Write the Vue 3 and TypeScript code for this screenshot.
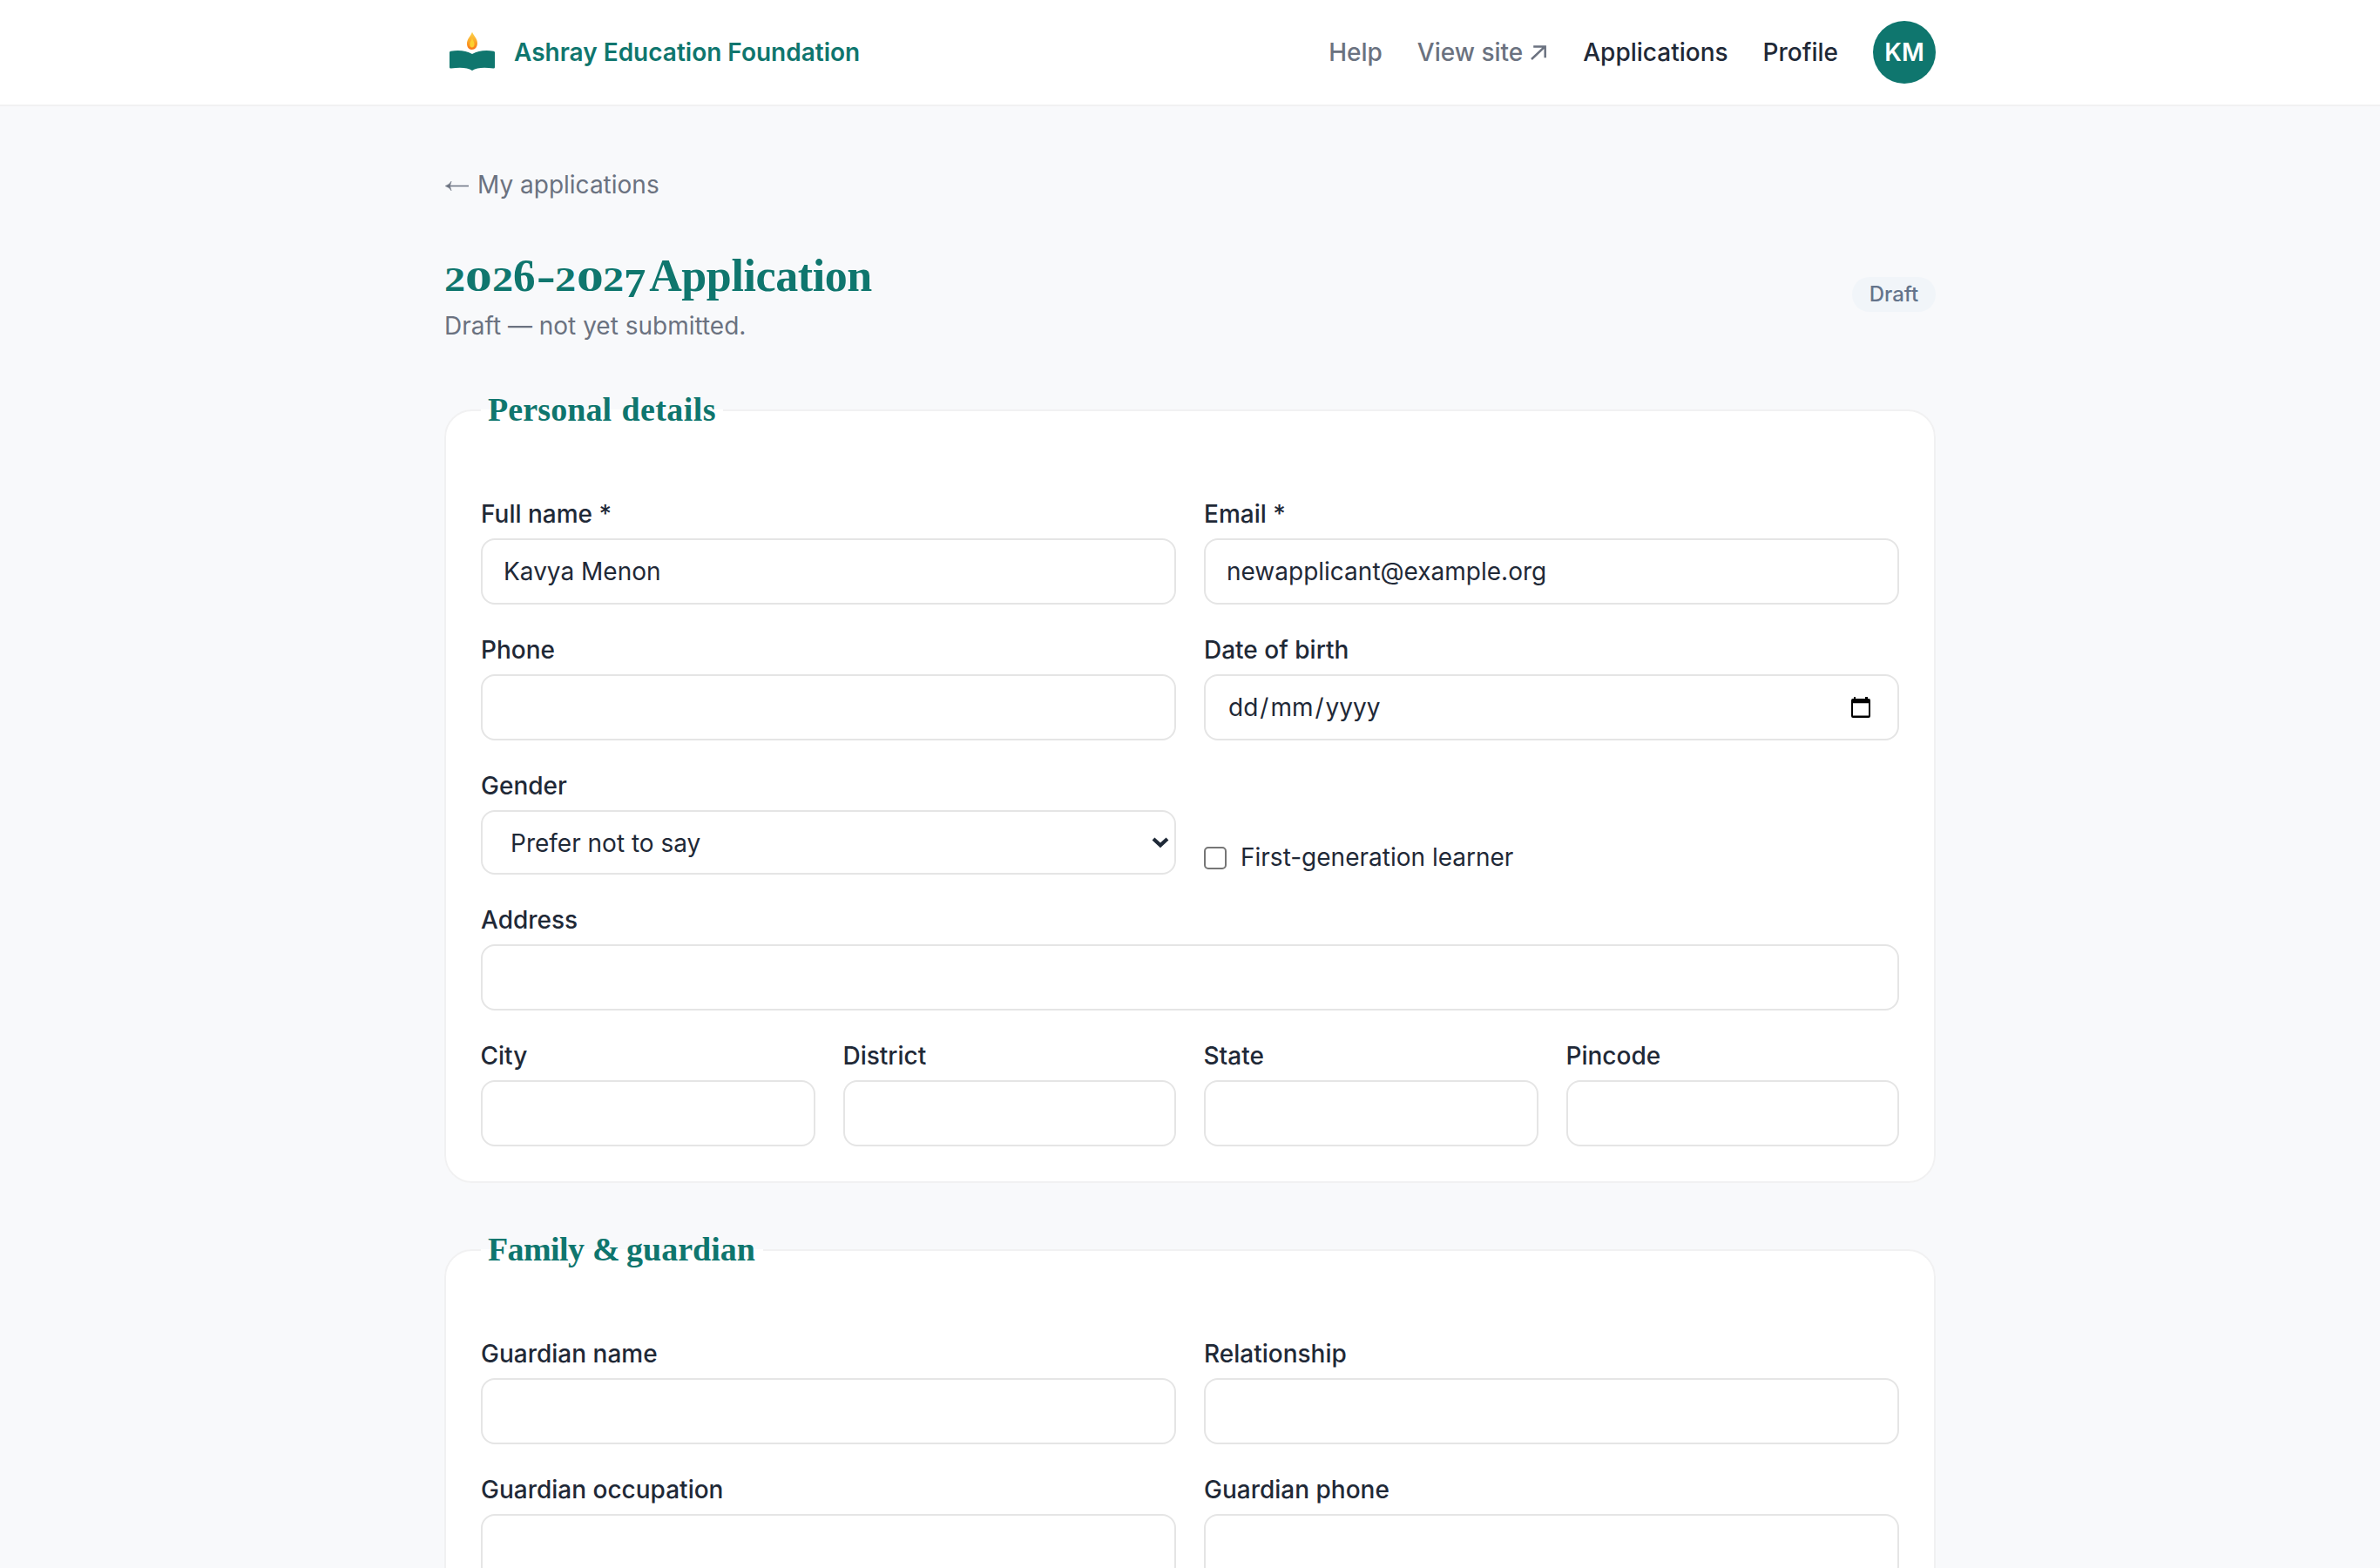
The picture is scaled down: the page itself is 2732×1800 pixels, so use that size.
<script setup lang="ts">
interface Glyph {
  char: string
  advance: number
  size: number
  stretch: number
  drop: number
}

interface Field {
  label: string
  span: number
  kind?: 'text' | 'date' | 'select' | 'check'
  value?: string
}

interface Word {
  text: string
  width: number
  spacing: number
}

// Old-style figures for the title: low 2 and 0, tall 6, descending 7.
const two = { char: '2', size: 39, stretch: 1.24, drop: 0 }
const zero = { char: '0', size: 39, stretch: 1.58, drop: 0 }
const year: Glyph[] = [
  { ...two, advance: 24 },
  { ...zero, advance: 31 },
  { ...two, advance: 24 },
  { char: '6', advance: 26.5, size: 52, stretch: 0.98, drop: 0 },
  { char: '-', advance: 21.7, size: 52, stretch: 1.25, drop: 0 },
  { ...two, advance: 25 },
  { ...zero, advance: 30 },
  { ...two, advance: 23.5 },
  { char: '7', advance: 20.5, size: 47, stretch: 1.08, drop: 7 },
]

const personalLegend: Word[] = [
  { text: 'Personal', width: 153.5, spacing: 0.1 },
  { text: 'details', width: 108.5, spacing: 0.4 },
]
const familyLegend: Word[] = [
  { text: 'Family', width: 120, spacing: -0.6 },
  { text: '&', width: 39, spacing: 0 },
  { text: 'guardian', width: 149, spacing: 0 },
]

const sections: { legend: Word[]; fields: Field[] }[] = [
  {
    legend: personalLegend,
    fields: [
      { label: 'Full name *', span: 2, value: 'Kavya Menon' },
      { label: 'Email *', span: 2, value: 'newapplicant@example.org' },
      { label: 'Phone', span: 2 },
      { label: 'Date of birth', span: 2, kind: 'date' },
      { label: 'Gender', span: 2, kind: 'select', value: 'Prefer not to say' },
      { label: 'First-generation learner', span: 2, kind: 'check' },
      { label: 'Address', span: 4 },
      { label: 'City', span: 1 },
      { label: 'District', span: 1 },
      { label: 'State', span: 1 },
      { label: 'Pincode', span: 1 },
    ],
  },
  {
    legend: familyLegend,
    fields: [
      { label: 'Guardian name', span: 2 },
      { label: 'Relationship', span: 2 },
      { label: 'Guardian occupation', span: 2 },
      { label: 'Guardian phone', span: 2 },
    ],
  },
]
</script>

<template>
  <div class="page">
    <header class="topbar">
      <div class="container bar">
        <a class="brand">
          <svg class="logo" width="64" height="64" viewBox="0 0 64 64">
            <defs>
              <linearGradient id="flame" x1="0" y1="0" x2="0" y2="1">
                <stop offset="0" stop-color="#fcd34d" />
                <stop offset="0.5" stop-color="#fbab2b" />
                <stop offset="1" stop-color="#f97316" />
              </linearGradient>
            </defs>
            <path d="M6 32.2Q6 31 7.4 30.7Q22 28.4 32 34Q42 28.4 56.6 30.7Q58 31 58 32.2V49.2Q58 50.8 56.2 50.6Q40 48 32 53Q24 48 7.8 50.6Q6 50.8 6 49.2Z" fill="#0f766e" />
            <path d="M32 8.8C34 13.3 38 16.5 38 21.5C38 26 35.3 29 31.6 29C28 29 26 26 26 22C26 17 30.2 13.6 32 8.8Z" fill="url(#flame)" />
            <path d="M32 15.6C32.8 18.4 34.6 20.2 34.6 22.8C34.6 25.2 33.4 26.6 31.8 26.6C30.2 26.6 29.2 25.2 29.2 23C29.2 20.2 31.3 18.3 32 15.6Z" fill="#fcd030" />
          </svg>
          <span class="brand-name">Ashray Education Foundation</span>
        </a>
        <nav class="nav">
          <a class="muted">Help</a>
          <a class="muted external">
            <span>View site</span>
            <svg width="18" height="17" viewBox="0 0 18 17" fill="none" stroke="#6b7280" stroke-width="2.5">
              <path d="M1 16L16.2 1.6M3.2 1.4H16.7V14.2" />
            </svg>
          </a>
          <a>Applications</a>
          <a>Profile</a>
          <span class="avatar">KM</span>
        </nav>
      </div>
    </header>

    <main class="container main">
      <a class="back">
        <svg width="30" height="16" viewBox="0 0 30 16" fill="none" stroke="#6b7280">
          <path d="M3 9.5H28" stroke-width="1.5" />
          <path d="M8 4.2Q6 8 1.2 9.5Q6 11 8 14.8L6.4 9.5Z" fill="#6b7280" stroke-width="0.6" />
        </svg>
        <span>My applications</span>
      </a>

      <div class="head">
        <div class="heading">
          <h1 class="title">
            <span v-for="(g, i) in year" :key="i" class="figure" :style="{ width: g.advance + 'px', fontSize: g.size + 'px', transform: `translateY(${g.drop}px) scaleX(${g.stretch})` }">{{ g.char }}</span>
            <span class="title-word">Application</span>
          </h1>
          <p class="subtitle">Draft — not yet submitted.</p>
        </div>
        <span class="pill">Draft</span>
      </div>

      <fieldset v-for="(s, i) in sections" :key="i" class="card">
        <legend class="legend">
          <span v-for="w in s.legend" :key="w.text" class="word" :style="{ width: w.width + 'px', letterSpacing: w.spacing + 'px' }">{{ w.text }}</span>
        </legend>
        <div class="grid">
          <div v-for="f in s.fields" :key="f.label" class="field" :class="'span-' + f.span">
            <label v-if="f.kind === 'check'" class="check">
              <span class="box"></span>
              <span>{{ f.label }}</span>
            </label>
            <template v-else>
              <label class="label">{{ f.label }}</label>
              <div v-if="f.kind === 'date'" class="control">
                <span class="date"><span>dd</span><i>/</i><span>mm</span><i>/</i><span>yyyy</span></span>
                <svg class="calendar" width="22" height="24" viewBox="0 0 22 24">
                  <path fill-rule="evenodd" d="M3 0H5V2H16V0H19V2H20Q22 2 22 4V22Q22 24 20 24H2Q0 24 0 22V4Q0 2 2 2H3ZM2 7.3V21.5H20V7.3Z" fill="#000" />
                </svg>
              </div>
              <div v-else-if="f.kind === 'select'" class="control select">
                <span>{{ f.value }}</span>
                <svg class="chevron" width="20" height="13" viewBox="0 0 20 13" fill="none">
                  <path d="M2 2L10 9.4L18 2" stroke="#1f2937" stroke-width="4.2" />
                </svg>
              </div>
              <div v-else class="control">{{ f.value }}</div>
            </template>
          </div>
        </div>
      </fieldset>
    </main>
  </div>
</template>

<style>
body {
  margin: 0;
  background: #f8f9fb;
}
</style>

<style scoped>
.page {
  box-sizing: border-box;
  height: 1800px;
  overflow: hidden;
  background: #f8f9fb;
  color: #1f2937;
  font-family: Inter, 'Liberation Sans', sans-serif;
  font-size: 28px;
  line-height: 40px;
  font-variation-settings: 'opsz' 14;
}

.container {
  width: 1712px;
  margin: 0 auto;
}

.topbar {
  background: #fff;
  border-bottom: 2px solid #f1f1f2;
}

.bar {
  display: flex;
  align-items: center;
  justify-content: space-between;
  height: 120px;
}

.brand {
  display: flex;
  align-items: center;
  gap: 16px;
  color: #0f766e;
  font-weight: 600;
}

.logo {
  display: block;
}

.nav {
  display: flex;
  align-items: center;
  gap: 40px;
  font-weight: 500;
}

.muted {
  color: #6b7280;
}

.external {
  display: flex;
  align-items: center;
  gap: 9px;
  padding-right: 2px;
}

.avatar {
  display: flex;
  align-items: center;
  justify-content: center;
  width: 72px;
  height: 72px;
  border-radius: 50%;
  background: #0f766e;
  color: #fff;
  font-weight: 600;
}

.main {
  padding-top: 70px;
}

.back {
  display: flex;
  align-items: center;
  gap: 8px;
  height: 40px;
  color: #6b7280;
}

.head {
  display: flex;
  align-items: center;
  justify-content: space-between;
  height: 130px;
  margin-top: 41px;
}

.heading {
  padding-top: 3px;
}

.title {
  display: flex;
  align-items: baseline;
  height: 64px;
  margin: 0;
  color: #0f766e;
  font-family: 'Liberation Serif', serif;
  font-size: 52px;
  font-weight: 700;
  line-height: 64px;
}

.figure {
  display: block;
  flex: none;
  transform-origin: 0 50%;
}

.title-word {
  margin-left: 9px;
  letter-spacing: -0.4px;
}

.subtitle {
  margin: 5px 0 0;
  color: #6b7280;
}

.pill {
  width: 96px;
  border-radius: 20px;
  background: #f1f5f9;
  color: #64748b;
  font-size: 24px;
  font-weight: 500;
  line-height: 40px;
  text-align: center;
}

.card {
  box-sizing: border-box;
  width: 1712px;
  min-width: 0;
  margin: 44px 0 53px;
  padding: 75px 40px 40px;
  border: 2px solid #f1f1f2;
  border-radius: 32px;
  background: #fff;
}

.card + .card {
  margin-top: 0;
}

.legend {
  display: flex;
  height: 48px;
  padding: 0 8px;
  color: #0f766e;
  font-family: 'Liberation Serif', serif;
  font-size: 38px;
  font-weight: 700;
  line-height: 46px;
}

.word {
  flex: none;
  white-space: nowrap;
}

.grid {
  display: grid;
  grid-template-columns: 384px 382px 384px 382px;
  gap: 32px;
}

.field {
  display: flex;
  flex-direction: column;
}

.span-2 {
  grid-column: span 2;
}

.span-4 {
  grid-column: span 4;
}

.label {
  margin-bottom: 8px;
  font-weight: 500;
}

.span-1 .label {
  margin-left: -0.5px;
}

.control {
  box-sizing: border-box;
  display: flex;
  align-items: center;
  justify-content: space-between;
  height: 76px;
  padding: 0 24px;
  border: 2px solid #e5e5e5;
  border-radius: 16px;
  background: #fff;
}

.date {
  display: flex;
  padding-left: 2px;
}

.date i {
  padding: 0 2px;
  font-style: normal;
}

.calendar {
  margin-right: 7px;
}

.select {
  height: 74px;
  padding: 0 6px 0 32px;
}

.select span {
  padding-top: 2px;
}

.check {
  display: flex;
  align-items: center;
  gap: 16px;
  margin-top: auto;
  height: 38px;
}

.check span + span {
  padding-bottom: 2px;
}

.box {
  box-sizing: border-box;
  width: 26px;
  height: 26px;
  border: 2px solid #767676;
  border-radius: 5px;
  background: #fff;
}
</style>
